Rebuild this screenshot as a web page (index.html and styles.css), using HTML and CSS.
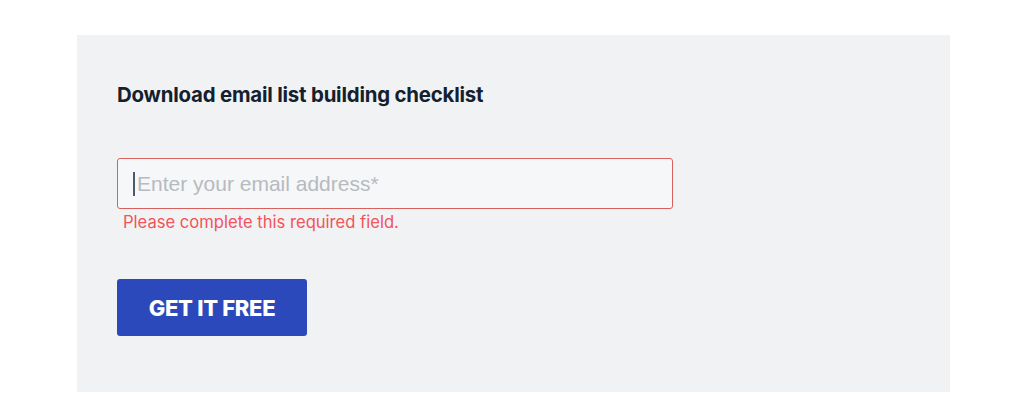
FILE: index.html
```html
<!DOCTYPE html>
<html>
<head>
<meta charset="utf-8">
<link rel="stylesheet" href="styles.css">
</head>
<body>
<div class="page">
  <div class="card">
    <h2 class="title">Download email list building checklist</h2>
    <form class="form">
      <div class="field">
        <div class="input"><span class="caret"></span><span class="placeholder">Enter your email address*</span></div>
        <div class="error">Please complete this required field.</div>
      </div>
      <button type="button" class="btn">GET IT FREE</button>
    </form>
  </div>
</div>
</body>
</html>
```
FILE: styles.css
```css
html, body {
  margin: 0;
  padding: 0;
  background: #ffffff;
}
.page {
  padding: 35px 0 0 77px;
}
.card {
  box-sizing: border-box;
  width: 873px;
  height: 357px;
  background: #f1f2f4;
  padding: 46px 40px 0 40px;
}
.title {
  margin: 0;
  font-family: Inter, "Liberation Sans", sans-serif;
  font-weight: 700;
  font-size: 20.4px;
  line-height: 28px;
  color: #14202e;
  letter-spacing: -0.2px;
}
.form {
  margin-top: 49px;
  display: flex;
  flex-direction: column;
  align-items: flex-start;
}
.field {
  display: flex;
  flex-direction: column;
}
.input {
  box-sizing: border-box;
  width: 556px;
  height: 51px;
  border: 1px solid #d9605c;
  border-radius: 3px;
  background: #f5f7f9;
  display: flex;
  align-items: center;
  padding-left: 15px;
}
.caret {
  width: 2px;
  height: 24px;
  background: #4a5a6e;
  margin-right: 2px;
}
.placeholder {
  font-family: "Liberation Sans", Arial, sans-serif;
  font-size: 21px;
  color: #b7babe;
}
.error {
  margin-top: 3px;
  padding-left: 6px;
  font-family: Inter, "Liberation Sans", sans-serif;
  font-size: 16.6px;
  line-height: 20px;
  color: #f2545b;
}
.btn {
  margin-top: 47px;
  width: 190px;
  height: 57px;
  border: none;
  border-radius: 3px;
  background: #2b49bb;
  color: #ffffff;
  font-family: Inter, "Liberation Sans", sans-serif;
  font-weight: 800;
  font-size: 22px;
  letter-spacing: -0.3px;
  padding: 0;
}
```
